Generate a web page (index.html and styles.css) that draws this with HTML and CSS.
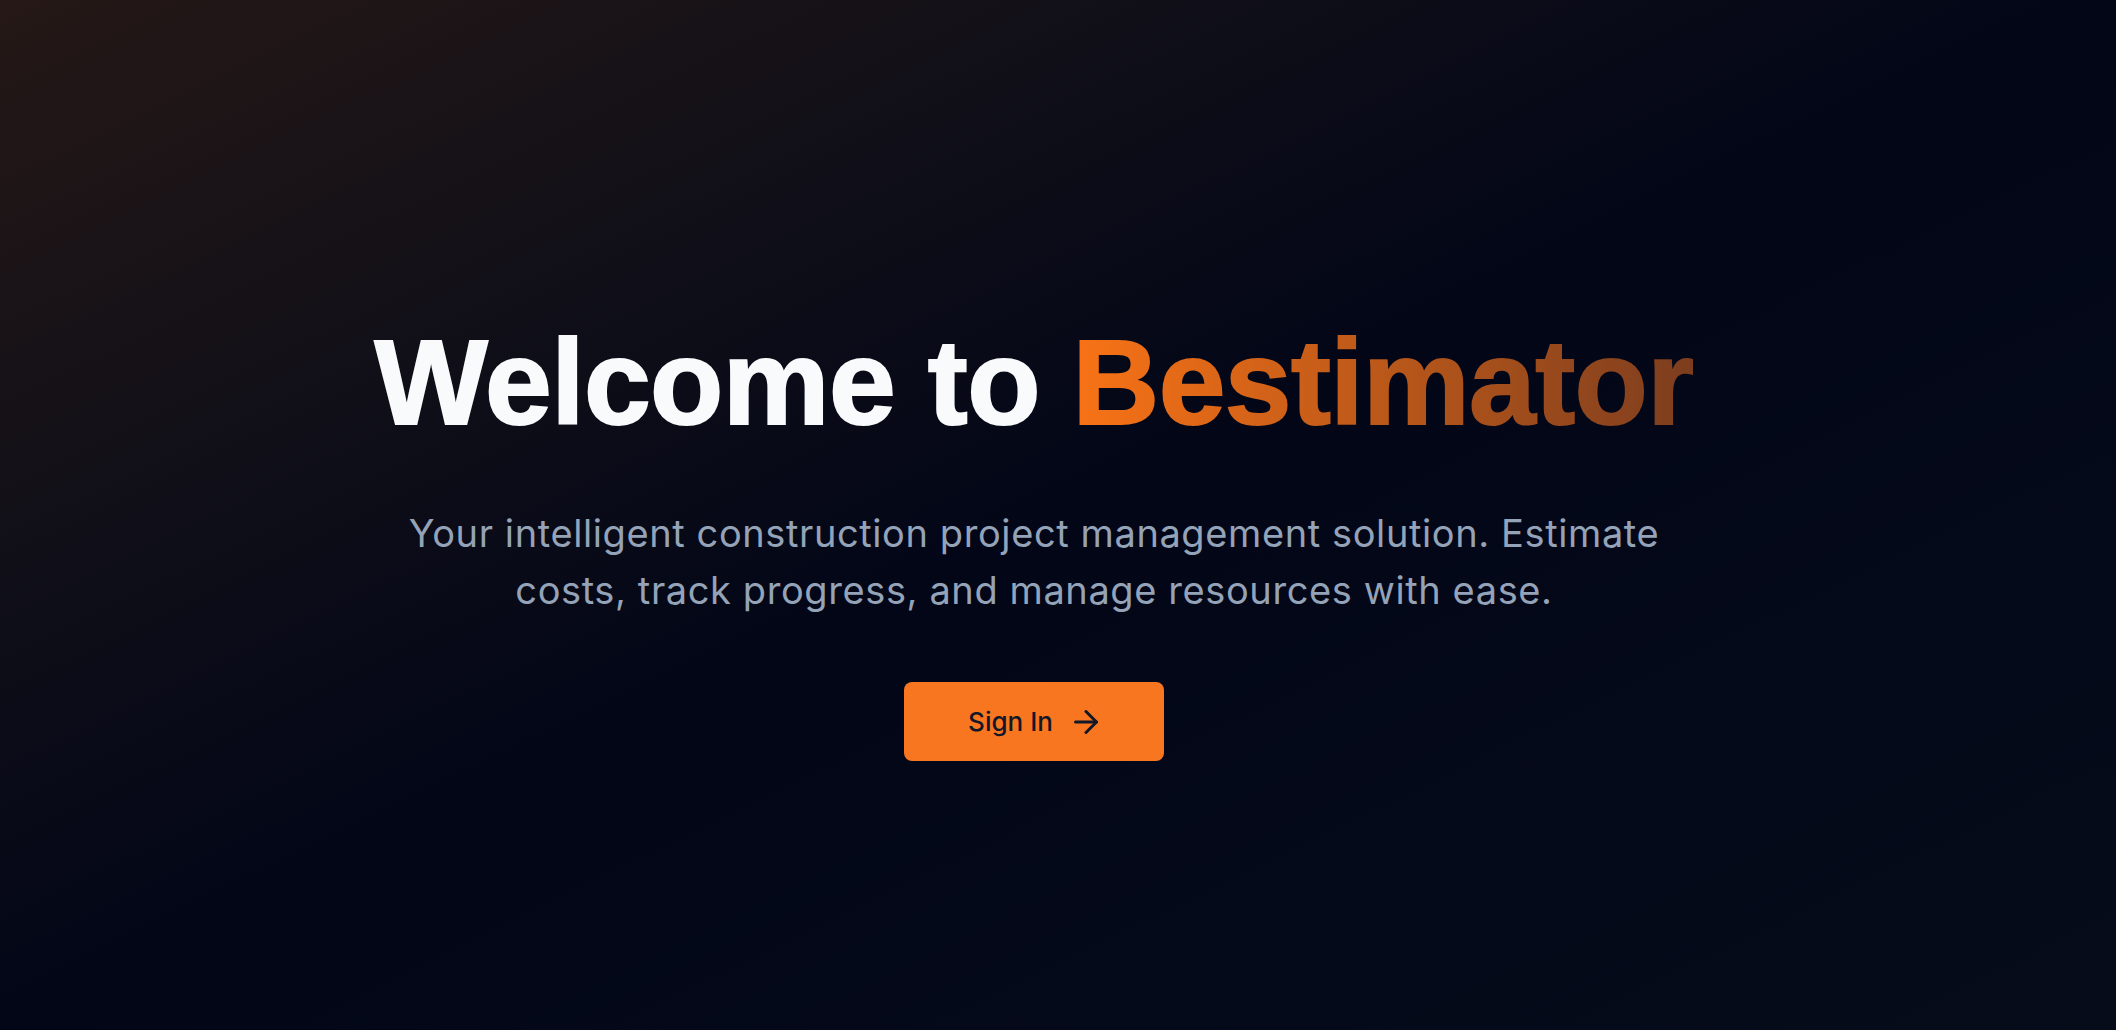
FILE: index.html
```html
<!DOCTYPE html>
<html lang="en">
<head>
<meta charset="utf-8">
<title>Bestimator</title>
<link rel="stylesheet" href="styles.css">
</head>
<body>
<main class="hero">
  <h1 class="title">Welcome to <span class="brand">Bestimator</span></h1>
  <p class="lead">Your intelligent construction project management solution. Estimate costs, track progress, and manage resources with ease.</p>
  <a class="btn" href="#">
    <span>Sign In</span>
    <svg class="arrow" width="24" height="24" viewBox="4 4 16 16" fill="none" stroke="currentColor" stroke-width="2" stroke-linecap="round" stroke-linejoin="round"><path d="M5 12h14"/><path d="m12 5 7 7-7 7"/></svg>
  </a>
</main>
</body>
</html>
```
FILE: styles.css
```css
html, body {
  margin: 0;
  padding: 0;
  height: 100%;
}
body {
  background: linear-gradient(to bottom right, #251816 0%, #100f18 28%, #020617 50%, #070c1b 100%);
  font-family: "Liberation Sans", Arial, sans-serif;
  overflow: hidden;
}
.hero {
  min-height: 100vh;
  box-sizing: border-box;
  padding: 316px 48px 0 0;
  display: flex;
  flex-direction: column;
  align-items: center;
  text-align: center;
}
.title {
  margin: 0;
  font-size: 120px;
  line-height: 132px;
  font-weight: 700;
  letter-spacing: -0.6px;
  color: #f8fafc;
  -webkit-text-stroke: 2px #f8fafc;
}
.brand {
  background: linear-gradient(to right, #f97316 0%, #7c3d1e 100%);
  -webkit-background-clip: text;
  background-clip: text;
  color: transparent;
  -webkit-text-stroke: 2px transparent;
}
.lead {
  margin: 57px 0 0;
  max-width: 1300px;
  font-family: Inter, "Liberation Sans", sans-serif;
  font-size: 38px;
  line-height: 57px;
  letter-spacing: 0.6px;
  color: #94a3b8;
}
.btn {
  margin-top: 63px;
  display: flex;
  align-items: center;
  gap: 21px;
  height: 79px;
  box-sizing: border-box;
  padding: 0 66px 0 64px;
  background: #f97620;
  border-radius: 8px;
  color: #111827;
  text-decoration: none;
  font-family: Inter, "Liberation Sans", sans-serif;
  font-weight: 500;
  font-size: 26px;
}
.arrow {
  display: block;
}
```
